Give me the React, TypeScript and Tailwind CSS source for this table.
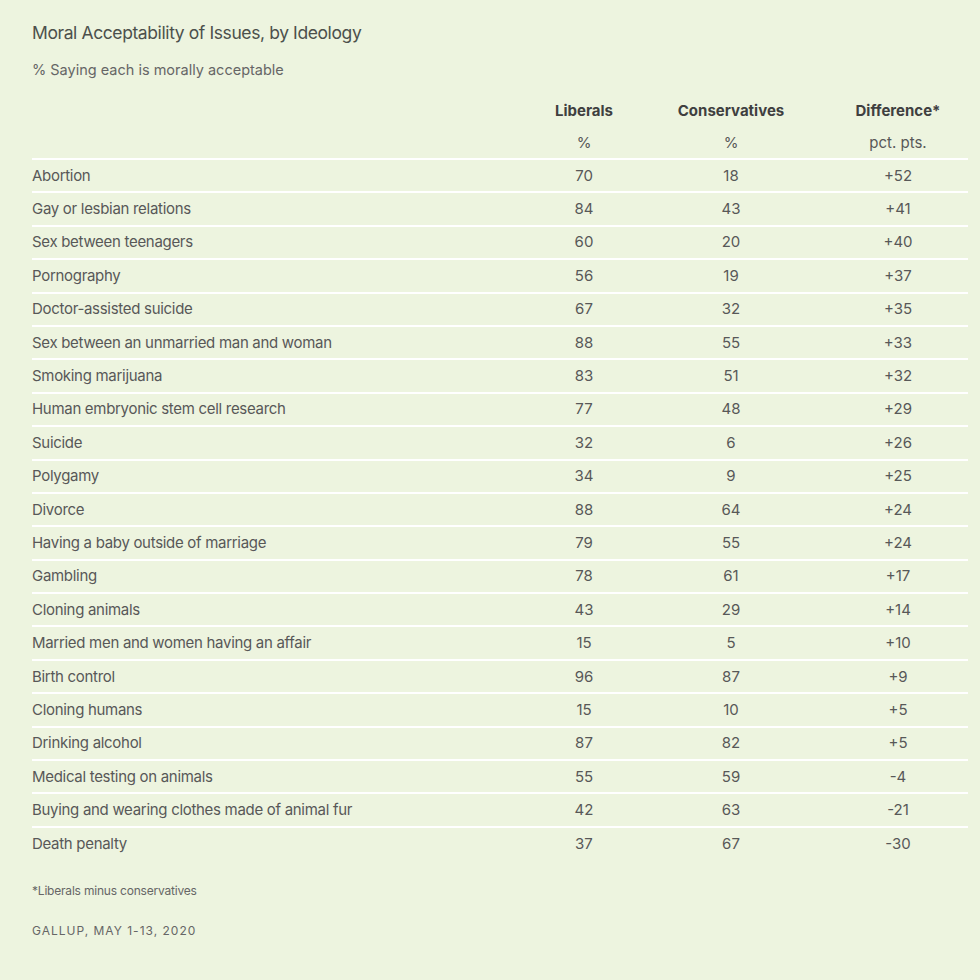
import React from "react";

const rows: [string, string, string, string][] = [
  ["Abortion", "70", "18", "+52"],
  ["Gay or lesbian relations", "84", "43", "+41"],
  ["Sex between teenagers", "60", "20", "+40"],
  ["Pornography", "56", "19", "+37"],
  ["Doctor-assisted suicide", "67", "32", "+35"],
  ["Sex between an unmarried man and woman", "88", "55", "+33"],
  ["Smoking marijuana", "83", "51", "+32"],
  ["Human embryonic stem cell research", "77", "48", "+29"],
  ["Suicide", "32", "6", "+26"],
  ["Polygamy", "34", "9", "+25"],
  ["Divorce", "88", "64", "+24"],
  ["Having a baby outside of marriage", "79", "55", "+24"],
  ["Gambling", "78", "61", "+17"],
  ["Cloning animals", "43", "29", "+14"],
  ["Married men and women having an affair", "15", "5", "+10"],
  ["Birth control", "96", "87", "+9"],
  ["Cloning humans", "15", "10", "+5"],
  ["Drinking alcohol", "87", "82", "+5"],
  ["Medical testing on animals", "55", "59", "-4"],
  ["Buying and wearing clothes made of animal fur", "42", "63", "-21"],
  ["Death penalty", "37", "67", "-30"],
];

export default function App() {
  return (
    <div
      className="w-[980px] h-[980px] bg-[#edf4df] pl-8 pr-3 pt-[21px] text-[#585858]"
      style={{ fontFamily: "Inter, 'Liberation Sans', Arial, sans-serif" }}
    >
      <div className="text-[17.5px] leading-[24px] text-[#4c504c] tracking-[-0.4px]">
        Moral Acceptability of Issues, by Ideology
      </div>
      <div className="mt-[15px] text-[14.5px] leading-[20px] text-[#666]">
        % Saying each is morally acceptable
      </div>
      <div className="mt-[21px] grid grid-cols-[478px_148px_146px_1fr] text-[15px] leading-[20px]">
        <div />
        <div className="text-center font-bold text-[#3f3f3f]">Liberals</div>
        <div className="text-center font-bold text-[#3f3f3f]">Conservatives</div>
        <div className="text-center font-bold text-[#3f3f3f] pl-6">Difference*</div>
        <div />
        <div className="text-center pt-3 pb-[5px]">%</div>
        <div className="text-center pt-3 pb-[5px]">%</div>
        <div className="text-center pt-3 pb-[5px] pl-6">pct. pts.</div>
      </div>
      <div>
        {rows.map((r) => (
          <div
            key={r[0]}
            className="grid grid-cols-[478px_148px_146px_1fr] h-[33.4px] border-t-2 border-white items-center text-[15px] leading-[20px]"
          >
            <div className="tracking-[-0.3px]">{r[0]}</div>
            <div className="text-center">{r[1]}</div>
            <div className="text-center">{r[2]}</div>
            <div className="text-center pl-6">{r[3]}</div>
          </div>
        ))}
      </div>
      <div className="mt-[24px] text-[12px] leading-[16px] tracking-[-0.2px] text-[#666]">
        *Liberals minus conservatives
      </div>
      <div className="mt-[24px] text-[12px] leading-[16px] tracking-[1px] text-[#666] uppercase">
        Gallup, May 1-13, 2020
      </div>
    </div>
  );
}
